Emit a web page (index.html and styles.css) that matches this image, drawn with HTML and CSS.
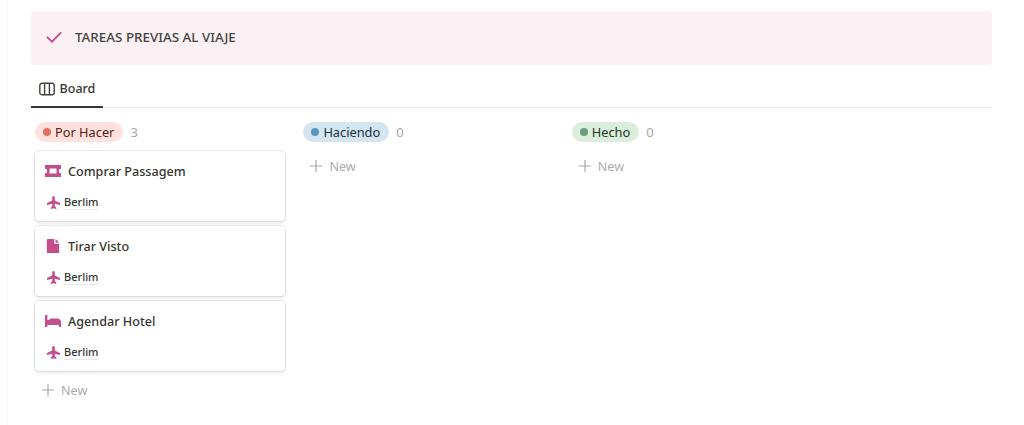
FILE: index.html
```html
<!DOCTYPE html>
<html lang="en">
<head>
    <meta charset="UTF-8">
    <meta name="viewport" content="width=device-width, initial-scale=1.0">
    <title>Tareas previas al viaje</title>
    <link rel="stylesheet" href="styles.css">
</head>
<body>
    <div class="page">
        <div class="callout">
            <svg class="callout-icon" viewBox="0 0 18 14"><path d="M1 6.5 L6.8 12 L17 1.5"/></svg>
            <span class="callout-text">TAREAS PREVIAS AL VIAJE</span>
        </div>

        <div class="tabs">
            <div class="tab">
                <svg class="tab-icon" viewBox="0 0 16 14"><rect x="0.8" y="1.3" width="14.4" height="11.4" rx="2"/><path d="M5.6 1.3 V12.7 M10.4 1.3 V12.7"/></svg>
                <span>Board</span>
            </div>
        </div>

        <div class="board">
            <div class="column">
                <div class="column-head">
                    <span class="pill pill-red"><i class="dot"></i>Por Hacer</span>
                    <span class="count">3</span>
                </div>
                <div class="card">
                    <div class="card-title">
                        <svg class="card-icon" viewBox="0 0 16 12"><path fill-rule="evenodd" d="M0 0 H16 V3.8 A2.2 2.2 0 0 0 16 8.2 V12 H0 V8.2 A2.2 2.2 0 0 0 0 3.8 Z M4.5 3.6 V8.4 H11.5 V3.6 Z"/></svg>
                        <span>Comprar Passagem</span>
                    </div>
                    <div class="card-prop">
                        <svg class="plane" viewBox="0 0 14 14"><path d="M7 0 C8 0 8.4 1 8.4 2 V4.8 L14 7.6 V9.6 L8.4 8.4 V11 L10 12.3 V14 L7 13.2 L4 14 V12.3 L5.6 11 V8.4 L0 9.6 V7.6 L5.6 4.8 V2 C5.6 1 6 0 7 0 Z"/></svg>
                        <span class="prop-link">Berlim</span>
                    </div>
                </div>
                <div class="card">
                    <div class="card-title">
                        <svg class="card-icon card-icon-doc" viewBox="0 0 14 16"><path d="M1 0 H8.5 V5.5 H14 V16 H1 A1 1 0 0 1 0 15 V1 A1 1 0 0 1 1 0 Z M10 0 L14 4 H10 Z"/></svg>
                        <span>Tirar Visto</span>
                    </div>
                    <div class="card-prop">
                        <svg class="plane" viewBox="0 0 14 14"><path d="M7 0 C8 0 8.4 1 8.4 2 V4.8 L14 7.6 V9.6 L8.4 8.4 V11 L10 12.3 V14 L7 13.2 L4 14 V12.3 L5.6 11 V8.4 L0 9.6 V7.6 L5.6 4.8 V2 C5.6 1 6 0 7 0 Z"/></svg>
                        <span class="prop-link">Berlim</span>
                    </div>
                </div>
                <div class="card">
                    <div class="card-title">
                        <svg class="card-icon" viewBox="0 0 16 12"><path d="M0 0 H2.4 V5 H4 L5.5 3.4 H12 C14.5 3.4 16 4.8 16 6.8 V12 H14 V10 H2.4 V12 H0 Z"/></svg>
                        <span>Agendar Hotel</span>
                    </div>
                    <div class="card-prop">
                        <svg class="plane" viewBox="0 0 14 14"><path d="M7 0 C8 0 8.4 1 8.4 2 V4.8 L14 7.6 V9.6 L8.4 8.4 V11 L10 12.3 V14 L7 13.2 L4 14 V12.3 L5.6 11 V8.4 L0 9.6 V7.6 L5.6 4.8 V2 C5.6 1 6 0 7 0 Z"/></svg>
                        <span class="prop-link">Berlim</span>
                    </div>
                </div>
                <div class="new-row">
                    <svg class="plus" viewBox="0 0 12 12"><path d="M6 0 V12 M0 6 H12"/></svg>
                    <span>New</span>
                </div>
            </div>

            <div class="column">
                <div class="column-head">
                    <span class="pill pill-blue"><i class="dot"></i>Haciendo</span>
                    <span class="count">0</span>
                </div>
                <div class="new-row">
                    <svg class="plus" viewBox="0 0 12 12"><path d="M6 0 V12 M0 6 H12"/></svg>
                    <span>New</span>
                </div>
            </div>

            <div class="column">
                <div class="column-head">
                    <span class="pill pill-green"><i class="dot"></i>Hecho</span>
                    <span class="count">0</span>
                </div>
                <div class="new-row">
                    <svg class="plus" viewBox="0 0 12 12"><path d="M6 0 V12 M0 6 H12"/></svg>
                    <span>New</span>
                </div>
            </div>
        </div>
    </div>
</body>
</html>
```

FILE: styles.css
```css
* {
    margin: 0;
    padding: 0;
    box-sizing: border-box;
}

html, body {
    height: 100%;
    overflow: hidden;
}

body {
    font-family: 'Noto Sans', 'Open Sans', sans-serif;
    color: #37352f;
    background: #fff;
}

.page {
    margin-left: 7px;
    height: 100%;
    padding: 11px 32px 0 23px;
    border-left: 1px solid #f7f7f6;
}

.callout {
    height: 54px;
    display: flex;
    align-items: center;
    padding-left: 15px;
    padding-bottom: 2px;
    background: #fbf0f4;
    border-radius: 4px;
}

.callout-icon {
    width: 16px;
    height: 12.5px;
    margin-right: 13px;
    fill: none;
    stroke: #c4488a;
    stroke-width: 2;
}

.callout-text {
    font-size: 13.4px;
    font-weight: 500;
    color: #45433e;
}

.tabs {
    height: 43px;
    display: flex;
    border-bottom: 1px solid #e9e9e7;
}

.tab {
    width: 72px;
    height: 43px;
    display: flex;
    align-items: center;
    justify-content: center;
    gap: 5px;
    font-size: 12.5px;
    font-weight: 500;
    padding-top: 6px;
    border-bottom: 2px solid #37352f;
}

.tab-icon {
    width: 16px;
    height: 14px;
    fill: none;
    stroke: #45433e;
    stroke-width: 1.4;
}

.board {
    display: flex;
    padding: 14px 0 0 4px;
}

.column {
    width: 268.4px;
}

.column-head {
    height: 20px;
    display: flex;
    align-items: center;
    gap: 7px;
}

.pill {
    height: 20px;
    display: flex;
    align-items: center;
    gap: 4px;
    padding: 0 9px 0 8px;
    font-size: 12.8px;
    border-radius: 10px;
    white-space: nowrap;
}

.dot {
    width: 8px;
    height: 8px;
    border-radius: 50%;
}

.pill-red { background: #ffe2dd; color: #5d1715; }
.pill-red .dot { background: #e16f64; }
.pill-blue { background: #d3e5ef; color: #183347; }
.pill-blue .dot { background: #5b97bd; }
.pill-green { background: #dbeddb; color: #1c3829; }
.pill-green .dot { background: #6c9b7d; }

.count {
    font-size: 13px;
    color: #a8a7a4;
}

.card {
    width: 250px;
    height: 70px;
    margin-bottom: 5px;
    padding: 11px 10px 0 10px;
    background: #fff;
    border-radius: 4px;
    box-shadow: 0 0 0 1px rgba(15, 15, 15, 0.08), 0 2px 4px rgba(15, 15, 15, 0.1);
}

.column-head + .card {
    margin-top: 9px;
}

.card-title {
    height: 18px;
    display: flex;
    align-items: center;
    font-size: 12.6px;
    font-weight: 500;
}

.card-icon {
    width: 16px;
    height: 16px;
    margin-right: 7px;
    fill: #c44d8c;
}

.card-icon-doc {
    padding: 1px;
}

.card-prop {
    height: 16px;
    margin-top: 14px;
    display: flex;
    align-items: center;
    font-size: 11px;
    font-weight: 500;
}

.plane {
    width: 13px;
    height: 13px;
    margin: 0 4px 0 2px;
    fill: #c44d8c;
}

.prop-link {
    border-bottom: 1px solid #e9e9e7;
    line-height: 14px;
}

.new-row {
    height: 24px;
    display: flex;
    align-items: center;
    margin-top: 12px;
    padding-left: 7px;
    gap: 7px;
    font-size: 12.6px;
    color: #adaca9;
}

.card + .new-row {
    margin-top: 7px;
}

.plus {
    width: 12px;
    height: 12px;
    fill: none;
    stroke: #a8a7a4;
    stroke-width: 1.2;
}
```
